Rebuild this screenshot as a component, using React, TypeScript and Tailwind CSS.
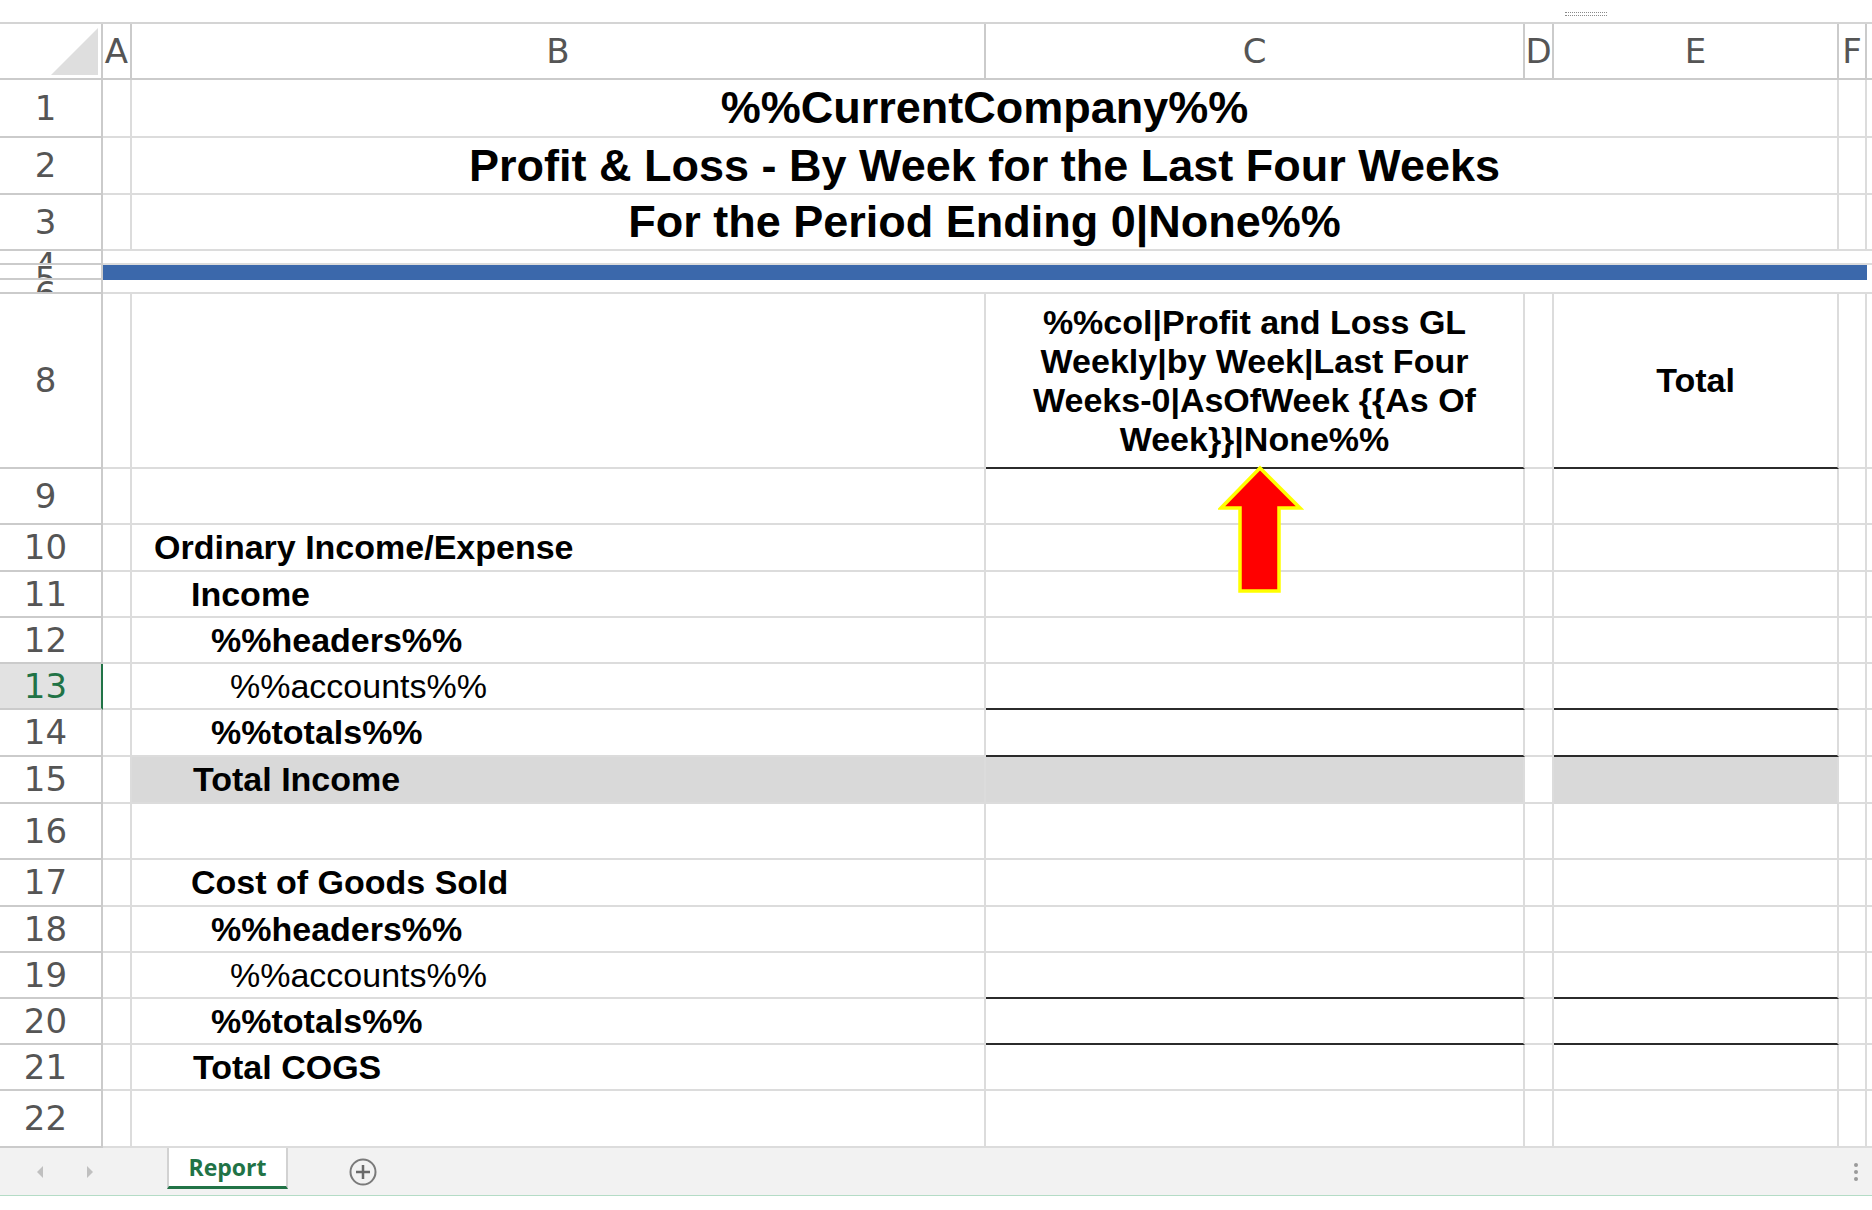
import type { ReactNode } from "react";

const grid = "border-r-2 border-b-2 border-[#dcdcdc]";
const head = "border-r-2 border-b-2 border-[#cbcbcb]";
const arial = "font-['Liberation_Sans',Arial,sans-serif] text-black";
const ui = "font-['DejaVu_Sans',sans-serif] text-[34px] text-[#555]";

type BodyRow = {
  n: string;
  h: string;
  text?: string;
  pad?: string;
  bold?: boolean;
  line?: boolean;
  fill?: boolean;
  selected?: boolean;
};

const body: BodyRow[] = [
  { n: "9", h: "h-[56px]" },
  { n: "10", h: "h-[47px]", text: "Ordinary Income/Expense", pad: "pl-[22px]", bold: true },
  { n: "11", h: "h-[46px]", text: "Income", pad: "pl-[59px]", bold: true },
  { n: "12", h: "h-[46px]", text: "%%headers%%", pad: "pl-[79px]", bold: true },
  { n: "13", h: "h-[46px]", text: "%%accounts%%", pad: "pl-[98px]", line: true, selected: true },
  { n: "14", h: "h-[47px]", text: "%%totals%%", pad: "pl-[79px]", bold: true, line: true },
  { n: "15", h: "h-[47px]", text: "Total Income", pad: "pl-[61px]", bold: true, fill: true },
  { n: "16", h: "h-[56px]" },
  { n: "17", h: "h-[47px]", text: "Cost of Goods Sold", pad: "pl-[59px]", bold: true },
  { n: "18", h: "h-[46px]", text: "%%headers%%", pad: "pl-[79px]", bold: true },
  { n: "19", h: "h-[46px]", text: "%%accounts%%", pad: "pl-[98px]", line: true },
  { n: "20", h: "h-[46px]", text: "%%totals%%", pad: "pl-[79px]", bold: true, line: true },
  { n: "21", h: "h-[46px]", text: "Total COGS", pad: "pl-[61px]", bold: true },
  { n: "22", h: "h-[57px]" },
];

const RowHead = ({ n, h, selected }: { n: string; h: string; selected?: boolean }) => (
  <div
    className={`${h} flex items-center justify-center pr-[10px] border-r-2 border-b-2 ${ui} ${
      selected ? "bg-[#e2e2e2] border-b-[#cbcbcb] border-r-[#217346] !text-[#217346]" : "border-[#cbcbcb]"
    }`}
  >
    {n}
  </div>
);

// rows 4-6 are squeezed, so the numbers get cut off
const TinyHead = ({ n, h }: { n: string; h: string }) => (
  <div className={`${h} overflow-hidden flex items-start justify-center pr-[10px] ${head} ${ui} leading-none`}>
    <span className="-mt-[3px]">{n}</span>
  </div>
);

const Title = ({ h, children }: { h: string; children: ReactNode }) => (
  <>
    <div className={`${h} ${grid}`} />
    <div className={`${h} col-span-4 flex items-center justify-center ${grid} ${arial} text-[45px] font-bold whitespace-nowrap`}>
      {children}
    </div>
    <div className={`${h} ${grid}`} />
    <div className={`${h} border-b-2 border-[#dcdcdc]`} />
  </>
);

const Letter = ({ l }: { l: string }) => (
  <div className={`h-[56px] flex items-center justify-center ${head} ${ui}`}>{l}</div>
);

export default function App() {
  return (
    <div className="relative w-[1872px] h-[1210px] bg-white overflow-hidden">
      <div className="h-[24px] border-b-2 border-[#d4d4d4] pl-[1565px] pt-[12px]">
        <div className="w-[42px] h-[4px] border-y border-dotted border-[#8a8a8a]" />
      </div>

      <div className="grid grid-cols-[103px_29px_854px_539px_29px_285px_28px_5px]">
        {/* column headers */}
        <div className={`h-[56px] flex items-end justify-end pr-[3px] pb-[3px] ${head}`}>
          <svg width="47" height="47" viewBox="0 0 47 47">
            <polygon points="47,0 47,47 0,47" fill="#dedede" />
          </svg>
        </div>
        {["A", "B", "C", "D", "E", "F"].map((l) => (
          <Letter key={l} l={l} />
        ))}
        <div className="h-[56px] border-b-2 border-[#cbcbcb]" />

        {/* report title */}
        <RowHead n="1" h="h-[58px]" />
        <Title h="h-[58px]">%%CurrentCompany%%</Title>
        <RowHead n="2" h="h-[57px]" />
        <Title h="h-[57px]">Profit &amp; Loss - By Week for the Last Four Weeks</Title>
        <RowHead n="3" h="h-[56px]" />
        <Title h="h-[56px]">For the Period Ending 0|None%%</Title>

        {/* blue rule */}
        <TinyHead n="4" h="h-[14px]" />
        <div className="h-[14px] col-span-6 border-b-2 border-[#dcdcdc]" />
        <div className="h-[14px] border-b-2 border-[#dcdcdc]" />
        <TinyHead n="5" h="h-[15px]" />
        <div className="h-[15px] col-span-6 bg-[#3b68ab]" />
        <div className="h-[15px]" />
        <TinyHead n="6" h="h-[14px]" />
        <div className="h-[14px] col-span-6 border-b-2 border-[#dcdcdc]" />
        <div className="h-[14px] border-b-2 border-[#dcdcdc]" />

        {/* column titles */}
        <RowHead n="8" h="h-[175px]" />
        <div className={`h-[175px] ${grid}`} />
        <div className={`h-[175px] ${grid}`} />
        <div
          className={`h-[175px] flex items-center justify-center text-center ${grid} border-b-[#2b2b2b] ${arial} text-[34px] font-bold leading-[39px] whitespace-nowrap`}
        >
          <div>
            %%col|Profit and Loss GL
            <br />
            Weekly|by Week|Last Four
            <br />
            Weeks-0|AsOfWeek {"{{"}As Of
            <br />
            Week{"}}"}|None%%
          </div>
        </div>
        <div className={`h-[175px] ${grid}`} />
        <div className={`h-[175px] flex items-center justify-center ${grid} border-b-[#2b2b2b] ${arial} text-[34px] font-bold`}>
          Total
        </div>
        <div className={`h-[175px] ${grid}`} />
        <div className="h-[175px] border-b-2 border-[#dcdcdc]" />

        {/* body */}
        {body.map((r) => (
          <Row key={r.n} r={r} />
        ))}
      </div>

      {/* sheet tabs */}
      <div className="h-[48px] bg-[#f2f2f2] border-b border-[#b4dcc6] flex items-stretch">
        <div className="w-[167px] flex items-center">
          <svg width="10" height="14" viewBox="0 0 10 14" className="ml-[35px]">
            <polygon points="8,1 8,13 2,7" fill="#c0c0c0" />
          </svg>
          <svg width="10" height="14" viewBox="0 0 10 14" className="ml-[40px]">
            <polygon points="2,1 2,13 8,7" fill="#c0c0c0" />
          </svg>
        </div>
        <div className="w-[121px] h-[41px] bg-white border-x-2 border-[#d2d2d2] border-b-[3px] border-b-[#217346] flex items-center justify-center font-['Open_Sans',sans-serif] text-[23px] font-bold text-[#217346]">
          Report
        </div>
        <div className="flex items-center pl-[60px]">
          <svg width="30" height="30" viewBox="0 0 30 30">
            <circle cx="15" cy="15" r="12.5" fill="none" stroke="#7a7a7a" strokeWidth="2" />
            <path d="M15 8v14M8 15h14" stroke="#6a6a6a" strokeWidth="2.5" />
          </svg>
        </div>
        <div className="flex-1 flex items-center justify-end pr-[14px]">
          <div className="flex flex-col gap-[3px]">
            <span className="w-[4px] h-[4px] rounded-full bg-[#9a9a9a]" />
            <span className="w-[4px] h-[4px] rounded-full bg-[#9a9a9a]" />
            <span className="w-[4px] h-[4px] rounded-full bg-[#9a9a9a]" />
          </div>
        </div>
      </div>

      {/* callout arrow */}
      <svg width="86" height="131" viewBox="0 0 86 131" className="absolute left-[1218px] top-[464px]">
        <polygon
          points="42,4 82,44 61,44 61,127 22,127 22,44 3,44"
          fill="#ff0000"
          stroke="#ffff00"
          strokeWidth="3.5"
        />
      </svg>
    </div>
  );
}

function Row({ r }: { r: BodyRow }) {
  const under = r.line ? "border-b-[#2b2b2b]" : "";
  const fill = r.fill ? "bg-[#d9d9d9] border-[#d9d9d9]" : "";
  return (
    <>
      <RowHead n={r.n} h={r.h} selected={r.selected} />
      <div className={`${r.h} ${grid}`} />
      <div
        className={`${r.h} flex items-center ${r.pad ?? ""} ${grid} ${fill} ${arial} text-[34px] whitespace-nowrap ${
          r.bold ? "font-bold" : "font-normal"
        }`}
      >
        {r.text}
      </div>
      <div className={`${r.h} ${grid} ${under} ${fill}`} />
      <div className={`${r.h} ${grid}`} />
      <div className={`${r.h} ${grid} ${under} ${r.fill ? "bg-[#d9d9d9] border-b-[#d9d9d9]" : ""}`} />
      <div className={`${r.h} ${grid}`} />
      <div className={`${r.h} border-b-2 border-[#dcdcdc]`} />
    </>
  );
}
